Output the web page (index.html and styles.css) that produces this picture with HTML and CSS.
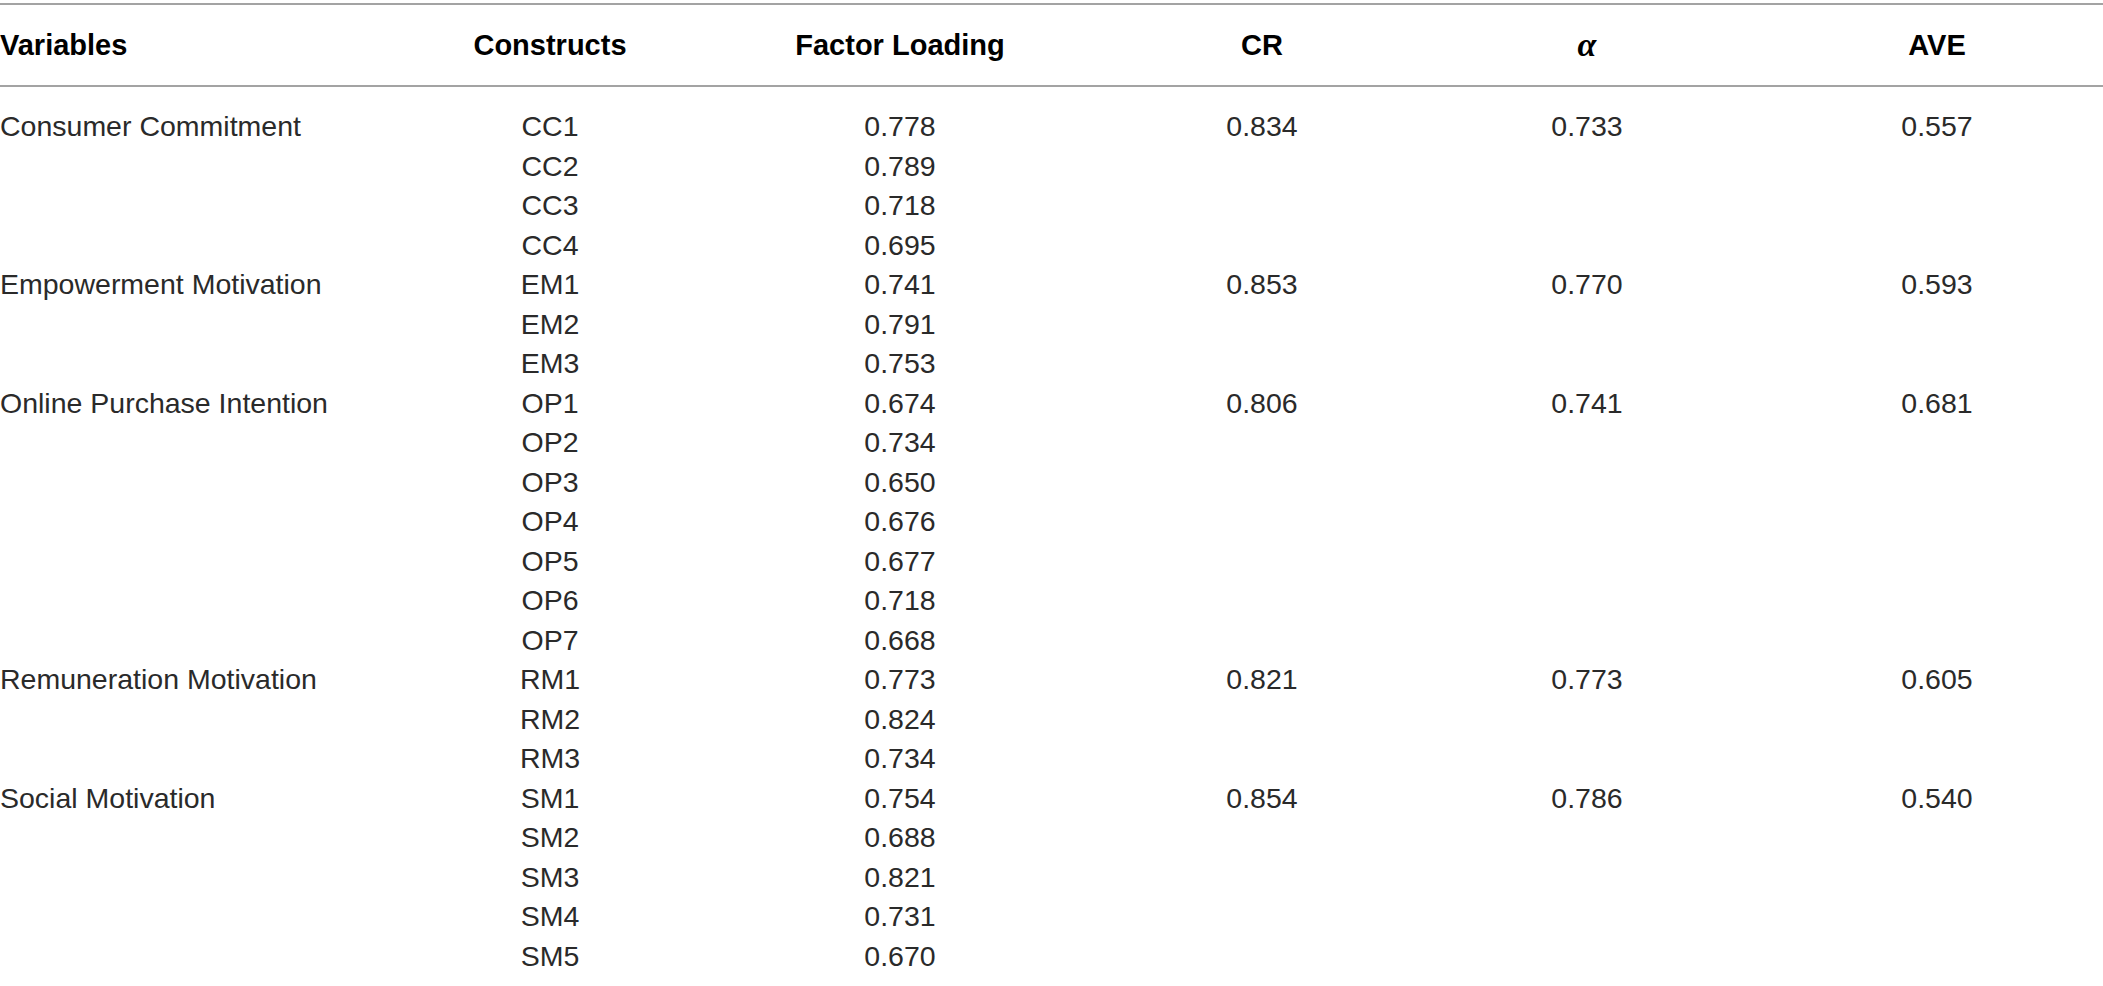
FILE: index.html
```html
<!DOCTYPE html>
<html lang="en">
<head>
<meta charset="utf-8">
<title>Measurement model</title>
<link rel="stylesheet" href="styles.css">
</head>
<body>
<table class="tbl">
  <colgroup>
    <col class="c-var"><col class="c-con"><col class="c-fl"><col class="c-cr"><col class="c-al"><col class="c-ave">
  </colgroup>
  <thead>
    <tr>
      <th class="left">Variables</th>
      <th>Constructs</th>
      <th>Factor Loading</th>
      <th>CR</th>
      <th><span class="alpha">α</span></th>
      <th>AVE</th>
    </tr>
  </thead>
  <tbody>
    <tr class="first"><td class="left">Consumer Commitment</td><td>CC1</td><td>0.778</td><td>0.834</td><td>0.733</td><td>0.557</td></tr>
    <tr><td class="left"></td><td>CC2</td><td>0.789</td><td></td><td></td><td></td></tr>
    <tr><td class="left"></td><td>CC3</td><td>0.718</td><td></td><td></td><td></td></tr>
    <tr><td class="left"></td><td>CC4</td><td>0.695</td><td></td><td></td><td></td></tr>
    <tr><td class="left">Empowerment Motivation</td><td>EM1</td><td>0.741</td><td>0.853</td><td>0.770</td><td>0.593</td></tr>
    <tr><td class="left"></td><td>EM2</td><td>0.791</td><td></td><td></td><td></td></tr>
    <tr><td class="left"></td><td>EM3</td><td>0.753</td><td></td><td></td><td></td></tr>
    <tr><td class="left">Online Purchase Intention</td><td>OP1</td><td>0.674</td><td>0.806</td><td>0.741</td><td>0.681</td></tr>
    <tr><td class="left"></td><td>OP2</td><td>0.734</td><td></td><td></td><td></td></tr>
    <tr><td class="left"></td><td>OP3</td><td>0.650</td><td></td><td></td><td></td></tr>
    <tr><td class="left"></td><td>OP4</td><td>0.676</td><td></td><td></td><td></td></tr>
    <tr><td class="left"></td><td>OP5</td><td>0.677</td><td></td><td></td><td></td></tr>
    <tr><td class="left"></td><td>OP6</td><td>0.718</td><td></td><td></td><td></td></tr>
    <tr><td class="left"></td><td>OP7</td><td>0.668</td><td></td><td></td><td></td></tr>
    <tr><td class="left">Remuneration Motivation</td><td>RM1</td><td>0.773</td><td>0.821</td><td>0.773</td><td>0.605</td></tr>
    <tr><td class="left"></td><td>RM2</td><td>0.824</td><td></td><td></td><td></td></tr>
    <tr><td class="left"></td><td>RM3</td><td>0.734</td><td></td><td></td><td></td></tr>
    <tr><td class="left">Social Motivation</td><td>SM1</td><td>0.754</td><td>0.854</td><td>0.786</td><td>0.540</td></tr>
    <tr><td class="left"></td><td>SM2</td><td>0.688</td><td></td><td></td><td></td></tr>
    <tr><td class="left"></td><td>SM3</td><td>0.821</td><td></td><td></td><td></td></tr>
    <tr><td class="left"></td><td>SM4</td><td>0.731</td><td></td><td></td><td></td></tr>
    <tr><td class="left"></td><td>SM5</td><td>0.670</td><td></td><td></td><td></td></tr>
  </tbody>
</table>
</body>
</html>
```

FILE: styles.css
```css
html, body {
  margin: 0;
  padding: 0;
  background: #ffffff;
  overflow: hidden;
}

body {
  font-family: "Liberation Sans", Arial, Helvetica, sans-serif;
  color: #2a2a2a;
}

.tbl {
  margin-top: 3px;
  width: 2103px;
  table-layout: fixed;
  border-collapse: collapse;
  font-size: 28.5px;
}

.c-var { width: 421px; }
.c-con { width: 258px; }
.c-fl  { width: 442px; }
.c-cr  { width: 282px; }
.c-al  { width: 368px; }
.c-ave { width: 332px; }

.tbl thead tr {
  border-top: 2px solid #a3a3a3;
  border-bottom: 2px solid #a3a3a3;
}

.tbl th {
  height: 80px;
  padding: 0;
  font-size: 29px;
  font-weight: bold;
  color: #000;
  text-align: center;
  vertical-align: middle;
  line-height: 1;
}

.tbl td {
  padding: 0;
  height: 39.5px;
  line-height: 39.5px;
  text-align: center;
  vertical-align: middle;
  white-space: nowrap;
}

.tbl .left {
  text-align: left;
}

.tbl tr.first td {
  padding-top: 20px;
}

.alpha {
  font-family: "Liberation Serif", "Times New Roman", serif;
  font-style: italic;
  font-weight: bold;
  font-size: 34px;
}
```
